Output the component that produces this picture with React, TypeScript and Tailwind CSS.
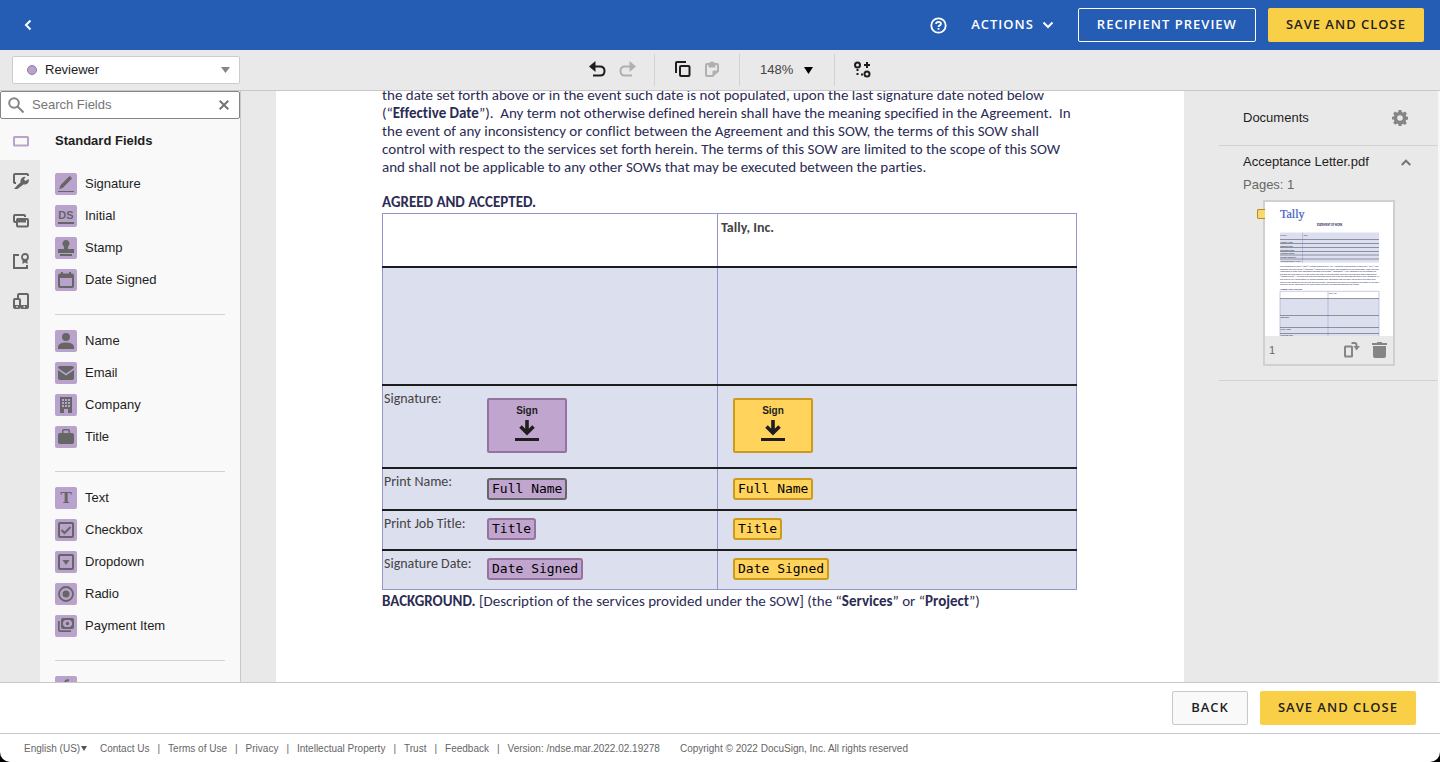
import type { ReactNode } from 'react';

const sans = "font-['Liberation_Sans',sans-serif]";
const buttonText = "font-['Open_Sans',sans-serif] text-[13px] font-semibold tracking-[1px] whitespace-nowrap";

interface Field {
  label: string;
  icon: ReactNode;
}

const fieldGroups: Field[][] = [
  [
    {
      label: 'Signature',
      icon: (
        <>
          <path d="M1.2 13.2 2.6 9 10.8.8q.8-.8 1.8-.2l.8.8q.8 1-.1 1.9L5 11.8z" />
          <path d="M0 15h16v1H0z" />
        </>
      ),
    },
    {
      label: 'Initial',
      icon: (
        <>
          <text x="8" y="10.500" textAnchor="middle" fontSize="11" fontWeight="700" fontFamily="'Liberation Sans', sans-serif">DS</text>
          <path d="M0 14h16v2H0z" />
        </>
      ),
    },
    {
      label: 'Stamp',
      icon: <path d="M8 0a3.500 3.500 0 0 1 2.500 6L10 7v2h6v4H0V9h6V7l-.5-1A3.500 3.500 0 0 1 8 0zM2 14h12v2H2z" />,
    },
    {
      label: 'Date Signed',
      icon: <path fillRule="evenodd" d="M3 0h2v1.500h6V0h2v1.500h1q2 0 2 2V14q0 2-2 2H2q-2 0-2-2V3.500q0-2 2-2h1zM2 6v7.500q0 .5.5.5h11q.5 0 .5-.5V6z" />,
    },
  ],
  [
    {
      label: 'Name',
      icon: <path d="M8 0a4 4 0 1 1 0 8 4 4 0 0 1 0-8zM0 16v-2.500Q1 9.500 8 9.500t8 4V16z" />,
    },
    {
      label: 'Email',
      icon: <path d="M2 1h12q2 0 2 2L8 8.500 0 3q0-2 2-2zM0 5l8 5.500L16 5v8q0 2-2 2H2q-2 0-2-2z" />,
    },
    {
      label: 'Company',
      icon: <path fillRule="evenodd" d="M2 0h12v16h-4v-4H6v4H2zM4 2v2h2V2zm3 0v2h2V2zm3 0v2h2V2zM4 5v2h2V5zm3 0v2h2V5zm3 0v2h2V5zM4 8v2h2V8zm3 0v2h2V8zm3 0v2h2V8z" />,
    },
    {
      label: 'Title',
      icon: <path fillRule="evenodd" d="M4 4V2q0-2 2-2h4q2 0 2 2v2h2q2 0 2 2v7q0 2-2 2H2q-2 0-2-2V6q0-2 2-2zm1.500 0h5V2q0-.5-.5-.5H6q-.5 0-.5.5z" />,
    },
  ],
  [
    {
      label: 'Text',
      icon: <text x="8" y="13" textAnchor="middle" fontSize="15" fontWeight="700" fontFamily="'DejaVu Serif', serif">T</text>,
    },
    {
      label: 'Checkbox',
      icon: (
        <>
          <rect x="1" y="1" width="14" height="14" rx="1" fill="none" stroke="#666" strokeWidth="2" />
          <path d="m3.500 8 3 3 6-6" fill="none" stroke="#666" strokeWidth="2" />
        </>
      ),
    },
    {
      label: 'Dropdown',
      icon: (
        <>
          <rect x="1" y="1" width="14" height="14" rx="1" fill="none" stroke="#666" strokeWidth="2" />
          <path d="M4.500 6h7L8 11z" />
        </>
      ),
    },
    {
      label: 'Radio',
      icon: (
        <>
          <circle cx="8" cy="8" r="7" fill="none" stroke="#666" strokeWidth="1.800" />
          <circle cx="8" cy="8" r="3.500" />
        </>
      ),
    },
    {
      label: 'Payment Item',
      icon: (
        <>
          <path d="M0 3h1.700v9.300H13V14H2q-2 0-2-2z" />
          <path fillRule="evenodd" d="M5 0h9q2 0 2 2v7q0 2-2 2H5q-2 0-2-2V2q0-2 2-2zm2 2L5 4v3l2 2h5l2-2V4l-2-2z" />
          <circle cx="9.500" cy="5.500" r="1.700" />
        </>
      ),
    },
  ],
];

const railItems: Field[] = [
  {
    label: 'Standard fields',
    icon: <rect x="1" y="4" width="14" height="8.500" rx=".6" fill="none" stroke="#b9a3cc" strokeWidth="2" />,
  },
  {
    label: 'Custom fields',
    icon: (
      <>
        <path d="M1 10V2q0-1 1-1h12q1 0 1 1v1" fill="none" stroke="#666" strokeWidth="2" />
        <path d="M0 9h3v2H1z" />
        <path d="M1 16q3-4 6.500-6.500Q7 6 9.500 4.500q1.500-1 3-.5L11 6.500l1.500 1.500L15.500 6q1 3-1 4.500-1.700 1.300-3.700.7Q7 14 4.500 16z" />
      </>
    ),
  },
  {
    label: 'Prefill fields',
    icon: (
      <>
        <path d="M3 9H2q-1 0-1-1V3q0-1 1-1h9q1 0 1 1v1" fill="none" stroke="#666" strokeWidth="2" />
        <rect x="4" y="6" width="11" height="7.500" rx="1" fill="none" stroke="#666" strokeWidth="2" />
        <path d="M4 5h9v4.500H4z" />
      </>
    ),
  },
  {
    label: 'Seal fields',
    icon: (
      <>
        <path d="M6 2H1v13h13v-3" fill="none" stroke="#666" strokeWidth="2" />
        <circle cx="12" cy="4" r="3" fill="none" stroke="#666" strokeWidth="1.800" />
        <path d="M9.500 6.500h5V11L12 9.500 9.500 11z" />
      </>
    ),
  },
  {
    label: 'Mobile fields',
    icon: (
      <>
        <path d="M5 5V2q0-1 1-1h8q1 0 1 1v12q0 1-1 1H8" fill="none" stroke="#666" strokeWidth="2" />
        <rect x="1" y="6" width="6" height="9" rx="1" fill="none" stroke="#666" strokeWidth="2" />
        <path d="M1 12h6v3H1zM8 12h7v3H8z" />
        <path d="M3.300 13h1.500v1.500H3.300zM10.500 13H12v1.500h-1.500z" fill="#e9e9e9" />
      </>
    ),
  },
];

const footerLinks = ['Contact Us', 'Terms of Use', 'Privacy', 'Intellectual Property', 'Trust', 'Feedback'];

const signRows = [
  { label: 'Print Name:', tag: 'Full Name', height: 'h-[42px]', tagPad: 'pt-[9px]', selected: true },
  { label: 'Print Job Title:', tag: 'Title', height: 'h-10', tagPad: 'pt-[7px]', selected: false },
  { label: 'Signature Date:', tag: 'Date Signed', height: 'h-10', tagPad: 'pt-[7px]', selected: false },
];

function Header() {
  return (
    <header className="flex h-[50px] shrink-0 items-center bg-[#245db3] pr-4 pl-6 text-white">
      <button aria-label="Back">
        <svg width="8" height="12" viewBox="0 0 8 12" fill="none" stroke="currentColor" strokeWidth="2">
          <path d="M6.500 1.500 2 6l4.500 4.500" />
        </svg>
      </button>
      <div className="ml-auto flex items-center">
        <button aria-label="Help" className="mr-6">
          <svg width="17" height="17" viewBox="0 0 17 17" fill="none" stroke="currentColor" strokeWidth="1.800">
            <circle cx="8.500" cy="8.500" r="7.200" />
            <path d="M6.100 7q0-2.200 2.400-2.200t2.400 1.900q0 1-1.200 1.700-1.200.6-1.200 1.600M8.500 11v1.700" />
          </svg>
        </button>
        <button className={`${buttonText} flex items-center gap-2`}>
          ACTIONS
          <svg width="12" height="8" viewBox="0 0 12 8" fill="none" stroke="currentColor" strokeWidth="2">
            <path d="m1.500 1.500 4.500 4.500 4.500-4.500" />
          </svg>
        </button>
        <button className={`${buttonText} ml-6 h-[34px] rounded-xs border border-white px-[18px]`}>RECIPIENT PREVIEW</button>
        <button className={`${buttonText} ml-3 h-[34px] rounded-xs bg-[#f9cf48] px-[18px] text-[#1e1e1e]`}>SAVE AND CLOSE</button>
      </div>
    </header>
  );
}

function Toolbar() {
  return (
    <div className="flex h-[41px] shrink-0 items-center border-b border-[#c8c8c8] bg-[#e9e9e9]">
      <label className="relative ml-3 flex w-[228px] shrink-0 items-center">
        <span className="absolute left-[15px] size-[10px] rounded-full border border-[#8f7aa3] bg-[#b9a3cc]" />
        <select aria-label="Recipient" className="h-7 w-full appearance-none rounded-xs border border-[#ccc] bg-white pl-8 text-[13px] text-[#1e1e1e]">
          <option>Reviewer</option>
        </select>
        <svg className="pointer-events-none absolute right-[10px]" width="9" height="6" viewBox="0 0 9 6" fill="#858585">
          <path d="M0 0h9L4.500 6z" />
        </svg>
      </label>
      <div className="flex flex-1 items-center justify-center text-[#1e1e1e]">
        <div className="flex h-8 w-[65px] items-center gap-[13px] pb-0.5">
          <button aria-label="Undo">
            <svg width="17" height="16" viewBox="0 0 17 16">
              <path d="M0 5.500 6.500 0v11z" fill="currentColor" />
              <path d="M5 5.500h6q4.500 0 4.500 4.500 0 4.500-4.500 4.500H4" fill="none" stroke="currentColor" strokeWidth="2" />
            </svg>
          </button>
          <button aria-label="Redo" className="text-[#b0b0b0]">
            <svg width="17" height="16" viewBox="0 0 17 16">
              <path d="M17 5.500 10.500 0v11z" fill="currentColor" />
              <path d="M12 5.500H6q-4.500 0-4.500 4.500 0 4.500 4.500 4.500h7" fill="none" stroke="currentColor" strokeWidth="2" />
            </svg>
          </button>
        </div>
        <div className="flex h-8 w-[85px] items-center gap-[13px] border-l border-[#d2d2d2] pb-0.5 pl-5">
          <button aria-label="Copy">
            <svg width="16" height="16" viewBox="0 0 16 16" fill="none" stroke="currentColor" strokeWidth="2">
              <path d="M1 12V2q0-1 1-1h9" />
              <rect x="5" y="5" width="9.500" height="10" rx="1" />
            </svg>
          </button>
          <button aria-label="Paste" className="text-[#b0b0b0]">
            <svg width="16" height="16" viewBox="0 0 16 16" fill="none" stroke="currentColor" strokeWidth="2">
              <path d="M8.500 15H3q-1 0-1-1V4q0-1 1-1h10q1 0 1 1v6z" />
              <path d="M5 2h6v4H5zM9 15v-5h5" fill="currentColor" strokeWidth="1" />
              <path d="M6.500 1.500h3" />
            </svg>
          </button>
        </div>
        <div className="flex h-8 w-[95px] items-center border-l border-[#d2d2d2] pl-5">
          <label className="relative flex items-center">
            <select aria-label="Zoom" className="w-[53px] appearance-none text-[13px] text-[#444]">
              <option>148%</option>
            </select>
            <svg className="pointer-events-none absolute right-0" width="9" height="7" viewBox="0 0 9 7">
              <path d="M0 0h9L4.500 7z" />
            </svg>
          </label>
        </div>
        <div className="flex h-8 w-[37px] items-center justify-end border-l border-[#d2d2d2] pb-0.5">
          <button aria-label="Conditional logic">
            <svg width="17" height="17" viewBox="0 0 17 17" fill="none" stroke="currentColor" strokeWidth="2">
              <circle cx="3.500" cy="4" r="2.500" />
              <circle cx="13" cy="13" r="2.500" />
              <path d="M13 1v6M10 4h6" />
              <path d="M3.500 8v2M3.500 12v2M7 13.500h2" />
            </svg>
          </button>
        </div>
      </div>
      <div className="w-[220px]" />
    </div>
  );
}

function Sidebar() {
  return (
    <aside className="flex w-[241px] shrink-0 flex-col border-r border-[#c8c8c8] bg-[#f9f9f9]">
      <form className="flex h-7 shrink-0 items-center rounded-xs border border-[#858585] bg-white pr-[10px] pl-[7px]">
        <svg width="16" height="16" viewBox="0 0 16 16" fill="none" stroke="#858585" strokeWidth="2">
          <circle cx="6" cy="6" r="4.800" />
          <path d="m9.500 9.500 6 6" />
        </svg>
        <input aria-label="Search fields" placeholder="Search Fields" className="ml-2 min-w-0 flex-1 text-[13px] outline-none placeholder:text-[#757575]" />
        <button type="button" aria-label="Clear">
          <svg width="10" height="10" viewBox="0 0 10 10" stroke="#757575" strokeWidth="2">
            <path d="m.7.7 8.600 8.600M9.300.7.7 9.300" />
          </svg>
        </button>
      </form>
      <div className="flex min-h-0 flex-1">
        <nav className="w-10 shrink-0 bg-[#e9e9e9]">
          {railItems.map((item, i) => (
            <button key={item.label} aria-label={item.label} className={`flex w-10 items-center justify-center pt-0.5 pl-0.5 ${i === 0 ? 'h-[41px] bg-[#f9f9f9]' : 'h-10'}`}>
              <svg width="16" height="16" viewBox="0 0 16 16" fill="#666">
                {item.icon}
              </svg>
            </button>
          ))}
        </nav>
        <div className="flex-1 overflow-hidden px-[15px]">
          <h2 className="pt-3 pb-[7px] text-[13px] leading-5 font-bold text-[#1e1e1e]">Standard Fields</h2>
          {fieldGroups.map((group, i) => (
            <ul key={i} className="flex flex-col gap-[10px] border-b border-[#d2d2d2] pt-[15px] pb-[23px]">
              {group.map((field) => (
                <li key={field.label}>
                  <button className="flex h-[22px] items-center gap-2 text-[13px] text-[#1e1e1e]">
                    <span className="flex size-[22px] items-center justify-center rounded-xs bg-[#b9a3cc]">
                      <svg width="16" height="16" viewBox="0 0 16 16" fill="#666">
                        {field.icon}
                      </svg>
                    </span>
                    {field.label}
                  </button>
                </li>
              ))}
            </ul>
          ))}
          <button aria-label="Formula" className="mt-[15px] flex size-[22px] items-center justify-center rounded-xs bg-[#b9a3cc]">
            <svg width="16" height="16" viewBox="0 0 16 16" fill="none" stroke="#666" strokeWidth="2">
              <path d="M11 1.500Q7.500.5 7 4L5.500 13q-.5 2.500-3 2M4 7h6" />
            </svg>
          </button>
        </div>
      </div>
    </aside>
  );
}

function SignTag({ color }: { color: string }) {
  return (
    <button className={`flex h-[55px] w-20 flex-col items-center rounded-xs border-2 pt-[3px] text-[10px] leading-4 font-bold text-[#1e1e1e] ${sans} ${color}`}>
      Sign
      <svg width="24" height="22" viewBox="0 0 24 22" fill="none" stroke="#1e1e1e">
        <path d="M12 1v12M5.500 7.500 12 14l6.500-6.500" strokeWidth="3.600" />
        <path d="M0 20.500h24" strokeWidth="3" />
      </svg>
    </button>
  );
}

function DataTag({ text, color }: { text: string; color: string }) {
  return (
    <button className={`flex h-[22px] items-center rounded-[3px] border-2 px-[3px] font-['DejaVu_Sans_Mono',monospace] text-[13px] text-black ${color}`}>
      {text}
    </button>
  );
}

const purple = 'border-[#96729f] bg-[#c0a5cf]';
const purpleSelected = 'border-[#666] bg-[#c0a5cf]';
const yellow = 'border-[#cc9a1c] bg-[#ffd35c]';

function DocumentPage() {
  return (
    <main className="mx-[35px] min-w-0 flex-1 overflow-hidden bg-white">
      <article className="mr-[107px] ml-[106px] font-['Carlito','Lato',sans-serif] text-[15px] leading-[18px] text-[#2c2c54] [font-variant-ligatures:none]">
        <p className="-mt-[5px]">
          the date set forth above or in the event such date is not populated, upon the last signature date noted below
          <br />(“<b>Effective Date</b>”).&nbsp; Any term not otherwise defined herein shall have the meaning specified in the Agreement.&nbsp; In
          <br />the event of any inconsistency or conflict between the Agreement and this SOW, the terms of this SOW shall
          <br />control with respect to the services set forth herein. The terms of this SOW are limited to the scope of this SOW
          <br />and shall not be applicable to any other SOWs that may be executed between the parties.
        </p>
        <p className="mt-[17px] mb-0.5 font-bold">AGREED AND ACCEPTED.</p>
        <table className="w-full table-fixed border-collapse border border-[#9295cf] bg-[#dcdfee] text-[14px] text-[#444]">
          <colgroup>
            <col className="w-[335px]" />
            <col />
          </colgroup>
          <tbody className="divide-y-2 divide-[#1c1c1c]">
            <tr className="h-[53px] bg-white align-top">
              <td className="border-r border-r-[#9295cf]" />
              <td className="pt-[5px] pl-[3px] font-bold">Tally, Inc.</td>
            </tr>
            <tr className="h-[118px]">
              <td className="border-r border-r-[#9295cf]" />
              <td />
            </tr>
            <tr className="h-[83px] align-top">
              <td className="border-r border-r-[#9295cf]">
                <div className="flex">
                  <span className="w-[104px] pt-1 pl-px">Signature:</span>
                  <div className="pt-3">
                    <SignTag color={purple} />
                  </div>
                </div>
              </td>
              <td className="pt-3 pl-[15px]">
                <SignTag color={yellow} />
              </td>
            </tr>
            {signRows.map((row) => (
              <tr key={row.label} className={`${row.height} align-top`}>
                <td className="border-r border-r-[#9295cf]">
                  <div className="flex">
                    <span className="w-[104px] pt-1 pl-px">{row.label}</span>
                    <div className={row.tagPad}>
                      <DataTag text={row.tag} color={row.selected ? purpleSelected : purple} />
                    </div>
                  </div>
                </td>
                <td className={`${row.tagPad} pl-[15px]`}>
                  <DataTag text={row.tag} color={yellow} />
                </td>
              </tr>
            ))}
          </tbody>
        </table>
        <p className="mt-0.5">
          <b>BACKGROUND.</b> [Description of the services provided under the SOW] (the “<b>Services</b>” or “<b>Project</b>”)
        </p>
      </article>
    </main>
  );
}

const thumbRows = [
  { label: 'ENTITY:', y: 33.500 },
  { label: 'Project Name:', y: 40.500 },
  { label: 'Effective Date:', y: 44.500 },
  { label: 'Expiration Date:', y: 48.500 },
  { label: 'Payment Terms:', y: 52.200 },
  { label: 'Billing Frequency:', y: 56 },
  { label: 'Purchase Order (if any):', y: 60 },
];

const thumbBody = [
  'This Statement of Work (“SOW”) is made between Tally, Inc., a company incorporated in Delaware (“Tally”) and',
  'Customer set forth below (“Customer”) pursuant to the terms and conditions of the Consulting Master Services',
  'Agreement or other such agreement between the parties (“Agreement”). The Agreement will be effective on',
  'the date set forth above or in the event such date is not populated, upon the last signature date noted below',
  '(“Effective Date”). Any term not otherwise defined herein shall have the meaning specified in the Agreement. In',
  'the event of any inconsistency or conflict between the Agreement and this SOW, the terms of this SOW shall',
  'control with respect to the services set forth herein. The terms of this SOW are limited to the scope of this SOW',
  'and shall not be applicable to any other SOWs that may be executed between the parties.',
];

function Thumbnail() {
  return (
    <svg className="block w-full bg-white" viewBox="0 0 128 134" fontFamily="Carlito, Lato, sans-serif" fontSize="2.2">
      <text x="15" y="16" fontSize="12" fill="#3d5bc4" stroke="#3d5bc4" strokeWidth=".2" fontFamily="'Liberation Serif', serif">Tally</text>
      <text x="64.500" y="24" textAnchor="middle" fontSize="2.800" fontWeight="700" fill="#2c2c54">STATEMENT OF WORK</text>
      <path d="M15 30.500h99v30H15z" fill="#dcdfee" />
      <path d="M37.500 30.500v30" stroke="#a3a6d6" strokeWidth=".6" />
      <path d="M15 37.500h99M15 41.500h99M15 45.500h99M15 49.500h99M15 53h99M15 57h99" stroke="#55586e" strokeWidth=".6" />
      <g fill="#222">
        {thumbRows.map((row) => (
          <text key={row.label} x="15.500" y={row.y}>{row.label}</text>
        ))}
        <text x="38.500" y="33.500">Tally</text>
      </g>
      <g fill="#2c2c54">
        {thumbBody.map((line, i) => (
          <text key={line} x="15" y={65 + i * 2.600}>{line}</text>
        ))}
        <text x="15" y="88" fontWeight="700">AGREED AND ACCEPTED.</text>
      </g>
      <path d="M15 96.500h99V134H15z" fill="#dcdfee" />
      <path d="M15 134V89.300h99V134M63 89.300V134" fill="none" stroke="#a3a6d6" strokeWidth=".6" />
      <path d="M15 96.500h99M15 113.500h99M15 125.500h99M15 131.500h99" stroke="#55586e" strokeWidth=".6" />
      <g fill="#222">
        <text x="64" y="92">Tally, Inc.</text>
        <text x="15.500" y="116">Signature:</text>
        <text x="15.500" y="128">Print Name:</text>
        <text x="15.500" y="133.500">Print Job Title:</text>
      </g>
    </svg>
  );
}

function DocumentsPanel() {
  return (
    <aside className="w-[221px] shrink-0 border-r-2 border-[#f7f7f7] text-[13px] leading-5 text-[#1e1e1e]">
      <div className="flex h-[55px] items-center justify-between border-b border-[#d2d2d2] pr-[30px] pl-6">
        <h2>Documents</h2>
        <button aria-label="Document settings">
          <svg width="16" height="16" viewBox="0 0 16 16" fill="#858585">
            <path
              fillRule="evenodd"
              d="M6.600 0h2.800l.4 2.100 1.300.6L12.900 1.500l2 2-1.200 1.700.6 1.300 1.700.3v2.700l-1.800.4-.6 1.300 1.200 1.800-2 2-1.700-1.200-1.300.6L9.400 16H6.600l-.4-1.900-1.300-.6-1.700 1.200-2-2 1.200-1.800-.6-1.300L0 9.500V6.800l1.800-.3.6-1.300L1.200 3.500l2-2 1.700 1.200 1.300-.6zM8 5.200a2.800 2.800 0 1 0 0 5.600 2.800 2.800 0 0 0 0-5.600z"
            />
          </svg>
        </button>
      </div>
      <section className="border-b border-[#d2d2d2] pt-[6px] pb-[14px] pl-6">
        <div className="flex items-center justify-between pr-[27px]">
          <h3>Acceptance Letter.pdf</h3>
          <button aria-label="Collapse">
            <svg width="10" height="7" viewBox="0 0 10 7" fill="none" stroke="#757575" strokeWidth="2">
              <path d="m.7 6 4.300-4.300L9.300 6" />
            </svg>
          </button>
        </div>
        <p className="mt-[3px] text-[#666]">Pages: 1</p>
        <div className="relative mt-[5px] ml-5 w-[132px] border-2 border-[#d0d0d0]">
          <span className="absolute top-[7px] -left-2 h-[10px] w-2 rounded-l-xs border border-r-0 border-[#b48a2a] bg-[#fbd86d]" />
          <Thumbnail />
          <div className="flex h-7 items-center pr-[6px] pl-1 text-[11px] text-[#666]">
            1
            <button aria-label="Rotate page" className="ml-auto">
              <svg width="16" height="16" viewBox="0 0 16 16" fill="none" stroke="#858585" strokeWidth="2">
                <rect x="1" y="4.500" width="7" height="10" rx=".5" />
                <path d="M7.500 1h3q2 0 2 2v2" />
                <path d="M9.500 4H16l-3.500 4.500z" fill="#858585" stroke="none" />
              </svg>
            </button>
            <button aria-label="Delete page" className="ml-3">
              <svg width="15" height="16" viewBox="0 0 15 16" fill="#858585">
                <path d="M5 0h5v1h5v2H0V1h5zM1 4h13v10q0 2-2 2H3q-2 0-2-2z" />
              </svg>
            </button>
          </div>
        </div>
      </section>
    </aside>
  );
}

function Footer() {
  return (
    <footer className="shrink-0">
      <div className="flex h-[52px] items-center justify-end gap-3 border-y border-[#c8c8c8] bg-white pr-6">
        <button className={`${buttonText} h-[34px] rounded-xs border border-[#c8c8c8] bg-[#f9f9f9] px-[18px] text-[#1e1e1e]`}>BACK</button>
        <button className={`${buttonText} h-[34px] rounded-xs bg-[#f9cf48] px-[18px] text-[#1e1e1e]`}>SAVE AND CLOSE</button>
      </div>
      <div className="flex h-7 items-center rounded-b-[10px] bg-white pl-6 text-[10px] text-[#666]">
        <label className="relative mr-[13px] flex items-center">
          <select aria-label="Language" className="w-[63px] appearance-none">
            <option>English (US)</option>
          </select>
          <svg className="pointer-events-none absolute right-0" width="6" height="5" viewBox="0 0 6 5" fill="#555">
            <path d="M0 0h6L3 5z" />
          </svg>
        </label>
        {footerLinks.map((link) => (
          <span key={link}>
            <a href="#">{link}</a>
            <span className="mx-2">|</span>
          </span>
        ))}
        <span>Version: /ndse.mar.2022.02.19278</span>
        <span className="ml-5">Copyright © 2022 DocuSign, Inc. All rights reserved</span>
      </div>
    </footer>
  );
}

export default function App() {
  return (
    <div className={`flex h-screen flex-col overflow-hidden bg-black ${sans}`}>
      <Header />
      <Toolbar />
      <div className="flex min-h-0 flex-1 bg-[#e9e9e9]">
        <Sidebar />
        <DocumentPage />
        <DocumentsPanel />
      </div>
      <Footer />
    </div>
  );
}
